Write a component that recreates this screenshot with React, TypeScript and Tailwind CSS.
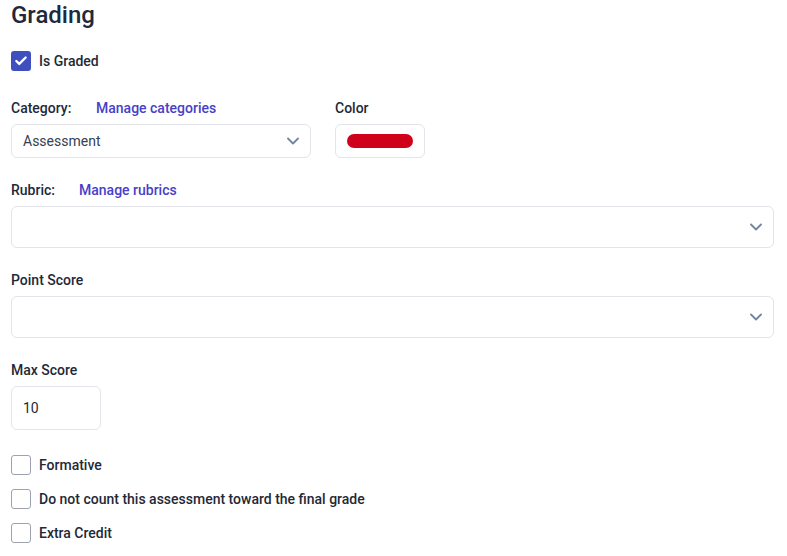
import { Check } from 'lucide-react';

const font = { fontFamily: 'Roboto, "Noto Sans", sans-serif' };

function Box({ checked = false }: { checked?: boolean }) {
  return checked ? (
    <span className="flex h-5 w-5 items-center justify-center rounded-[3px] bg-[#3f4fbf]">
      <Check className="h-[14px] w-[14px] text-white" strokeWidth={4} />
    </span>
  ) : (
    <span className="h-5 w-5 rounded-[3px] border border-[#9ca3af] bg-white" />
  );
}

function CheckRow({ label, checked, className = '' }: { label: string; checked?: boolean; className?: string }) {
  return (
    <label className={`flex h-5 items-center gap-2 ${className}`}>
      <Box checked={checked} />
      <span className="text-[14px] font-medium text-[#1f2937]">{label}</span>
    </label>
  );
}

function Chevron() {
  return (
    <svg width="12" height="8" viewBox="0 0 12 8" fill="none" className="text-[#7384a3]">
      <path d="M1 1.5l5 5 5-5" stroke="currentColor" strokeWidth="1.8" strokeLinecap="round" strokeLinejoin="round" />
    </svg>
  );
}

function Select({ value = '', height, className = '' }: { value?: string; height: string; className?: string }) {
  return (
    <div
      className={`flex items-center justify-between rounded-md border border-[#e2e4e9] bg-white pl-[11px] pr-[11px] ${height} ${className}`}
    >
      <span className="text-[14px] text-[#374151]">{value}</span>
      <Chevron />
    </div>
  );
}

export default function App() {
  return (
    <main className="min-h-screen bg-white pl-[11px] pr-[13px]" style={font}>
      <h2 className="text-[24px] leading-[30px] font-medium text-[#1e293b]">Grading</h2>

      <CheckRow label="Is Graded" checked className="mt-[21px]" />

      {/* Category + color */}
      <div className="mt-[27px] flex gap-6">
        <div className="w-[300px]">
          <div className="flex h-5 items-center text-[14px] font-medium leading-5">
            <span className="w-[85px] text-[#1f2937]">Category:</span>
            <a className="text-[#4840c8]">Manage categories</a>
          </div>
          <Select value="Assessment" height="h-[34px]" className="mt-[6px]" />
        </div>
        <div>
          <div className="h-5 text-[14px] font-medium leading-5 text-[#1f2937]">Color</div>
          <div className="mt-[6px] flex h-[34px] w-[90px] items-center justify-center rounded-md border border-[#e2e4e9]">
            <span className="h-[14px] w-[66px] rounded-full bg-[#d0021b]" />
          </div>
        </div>
      </div>

      {/* Rubric */}
      <div className="mt-[22px]">
        <div className="flex h-5 items-center text-[14px] font-medium leading-5">
          <span className="w-[68px] text-[#1f2937]">Rubric:</span>
          <a className="text-[#4840c8]">Manage rubrics</a>
        </div>
        <Select height="h-[42px]" className="mt-[6px]" />
      </div>

      {/* Point score */}
      <div className="mt-[22px]">
        <div className="h-5 text-[14px] font-medium leading-5 text-[#1f2937]">Point Score</div>
        <Select height="h-[42px]" className="mt-[6px]" />
      </div>

      {/* Max score */}
      <div className="mt-[22px]">
        <div className="h-5 text-[14px] font-medium leading-5 text-[#1f2937]">Max Score</div>
        <div className="mt-[6px] flex h-[44px] w-[90px] items-center rounded-md border border-[#e2e4e9] px-[11px] text-[14px] text-[#1f2937]">
          10
        </div>
      </div>

      <div className="mt-[25px] flex flex-col gap-[14px] pb-4">
        <CheckRow label="Formative" />
        <CheckRow label="Do not count this assessment toward the final grade" />
        <CheckRow label="Extra Credit" />
      </div>
    </main>
  );
}
